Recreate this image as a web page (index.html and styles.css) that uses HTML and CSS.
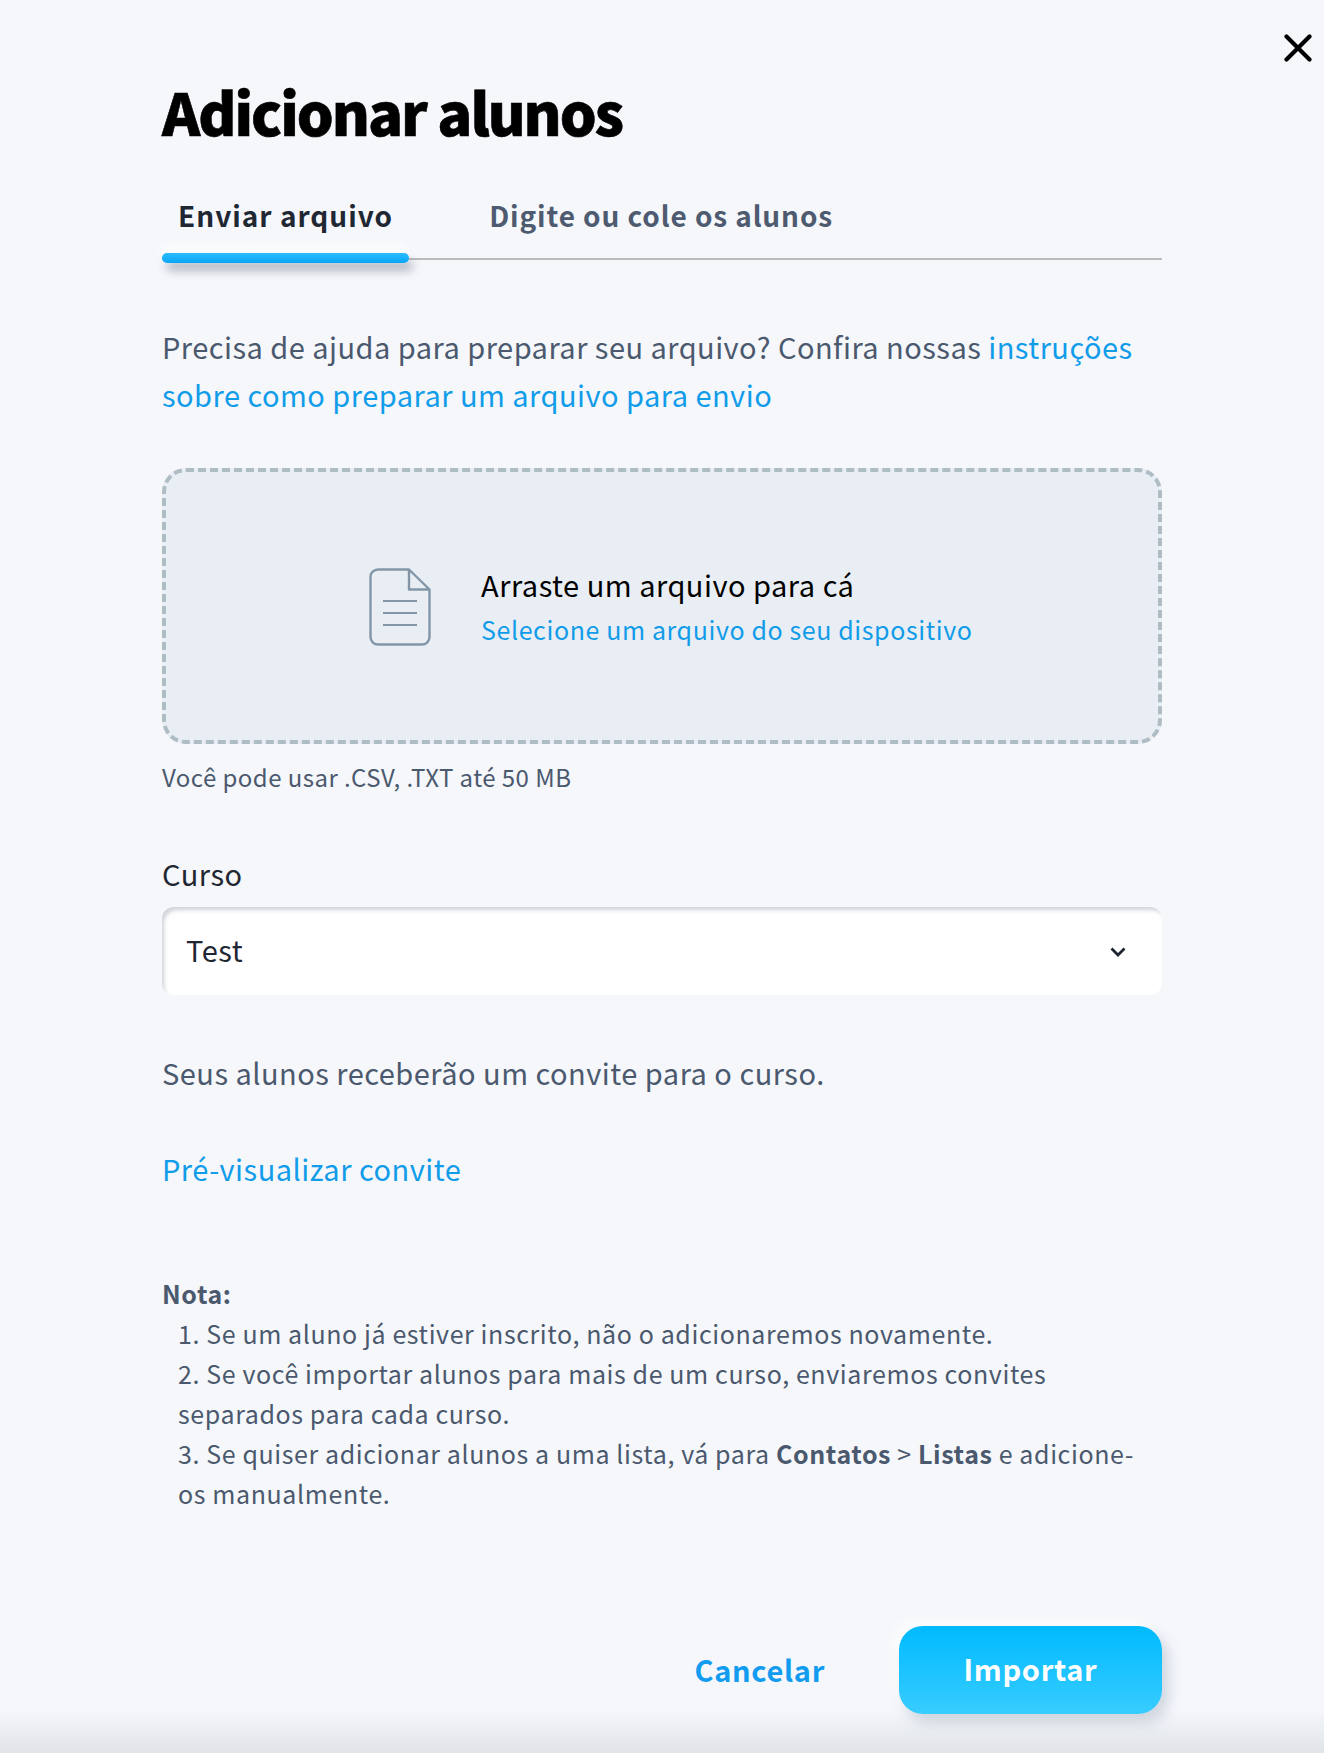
FILE: index.html
```html
<!DOCTYPE html>
<html lang="pt-BR">
<head>
<meta charset="utf-8">
<title>Adicionar alunos</title>
<link rel="stylesheet" href="styles.css">
</head>
<body>
<button class="close" aria-label="Fechar">
  <svg viewBox="0 0 28 28" width="28" height="28"><path d="M2.500 2.500 25.500 25.500M25.500 2.500 2.500 25.500" fill="none" stroke="#000" stroke-width="4.200" stroke-linecap="round"/></svg>
</button>
<main class="modal">
  <h1 class="title">Adicionar alunos</h1>
  <nav class="tabs">
    <a class="tab tab-active">Enviar arquivo</a>
    <a class="tab">Digite ou cole os alunos</a>
  </nav>
  <p class="intro">Precisa de ajuda para preparar seu arquivo? Confira nossas <a class="link">instruções sobre como preparar um arquivo para envio</a></p>
  <div class="drop">
    <svg class="doc" viewBox="0 0 62 78" width="62" height="78"><path d="M40 1.500H9A7.500 7.500 0 0 0 1.500 9V69A7.500 7.500 0 0 0 9 76.500H53A7.500 7.500 0 0 0 60.500 69V21.500H40V1.500L60.500 21.500" fill="none" stroke="#8296a8" stroke-width="2.400" stroke-linejoin="round"/><path d="M14 33H48M14 45H48M14 57H48" stroke="#8296a8" stroke-width="2"/></svg>
    <div class="drop-text">
      <div class="drop-title">Arraste um arquivo para cá</div>
      <a class="drop-link">Selecione um arquivo do seu dispositivo</a>
    </div>
  </div>
  <p class="hint">Você pode usar .CSV, .TXT até 50 MB</p>
  <label class="label">Curso</label>
  <div class="select">
    <span class="select-value">Test</span>
    <svg class="chevron" viewBox="0 0 16 10" width="16" height="10"><path d="M1.500 1.500 8 8l6.500-6.500" fill="none" stroke="#1f2530" stroke-width="2.800"/></svg>
  </div>
  <p class="invite">Seus alunos receberão um convite para o curso.</p>
  <a class="preview">Pré-visualizar convite</a>
  <section class="note">
    <strong class="note-title">Nota:</strong>
    <ol class="note-list">
      <li>Se um aluno já estiver inscrito, não o adicionaremos novamente.</li>
      <li>Se você importar alunos para mais de um curso, enviaremos convites separados para cada curso.</li>
      <li>Se quiser adicionar alunos a uma lista, vá para <strong>Contatos</strong> &gt; <strong>Listas</strong> e adicione-os manualmente.</li>
    </ol>
  </section>
  <footer class="actions">
    <button class="cancel">Cancelar</button>
    <button class="import">Importar</button>
  </footer>
</main>
<div class="shade"></div>
</body>
</html>
```
FILE: styles.css
```css
* { box-sizing: border-box; }
html, body { margin: 0; height: 1753px; overflow: hidden; }
body {
  position: relative;
  background: #f5f7fb;
  font-family: "Noto Sans CJK JP", "Noto Sans", sans-serif;
  color: #4b596e;
}
.close {
  position: absolute; top: 34px; left: 1284px;
  padding: 0; border: 0; background: none; line-height: 0;
}
.modal { position: relative; z-index: 1; width: 1000px; margin: 0 auto; padding-top: 69px; }
.title {
  margin: 0; font-size: 58px; line-height: 84px; font-weight: 900;
  color: #000; letter-spacing: -2px; -webkit-text-stroke: .6px #000;
}
.tabs {
  display: flex; gap: 96px; margin-top: 39px; height: 68px;
  padding-left: 16px; border-bottom: 2px solid #bbb;
}
.tab {
  font-size: 28px; line-height: 46px; font-weight: 700; color: #4d5a70; letter-spacing: .9px;
  position: relative; height: 66px;
}
.tab-active { color: #1f2733; letter-spacing: 1px; }
.tab-active::after {
  content: ""; position: absolute; left: -16px; right: -16px; bottom: -5px; height: 10px;
  border-radius: 5px; background: linear-gradient(#2bbcff, #0aa6f6);
  box-shadow: 4px 8px 10px rgba(70,80,100,.38), -2px -7px 10px rgba(255,255,255,.8);
}
.intro { margin: 62px 0 0; font-size: 29px; line-height: 48px; letter-spacing: .47px; }
.link, .drop-link, .preview { color: #119cea; }
.drop {
  display: flex; align-items: center; gap: 50px;
  height: 276px; margin-top: 50px; padding: 2px 0 0 203px;
  background: #e9eef5; border: 4px dashed #aebcc4; border-radius: 24px;
}
.drop-title { font-size: 29px; line-height: 44px; color: #000; letter-spacing: .5px; }
.drop-link { display: block; font-size: 25px; line-height: 46px; letter-spacing: .6px; }
.hint { margin: 15px 0 0; font-size: 24px; line-height: 36px; letter-spacing: .45px; }
.label { display: block; margin-top: 55px; font-size: 29px; line-height: 46px; color: #1f2733; letter-spacing: .5px; }
.select {
  display: flex; align-items: center; justify-content: space-between;
  height: 88px; margin-top: 11px; padding: 0 36px 0 24px;
  background: #fff; border-radius: 12px; font-size: 29px; color: #1f2733; letter-spacing: .5px;
  box-shadow: inset 3px 4px 4px -1px rgba(110,125,145,.35);
}
.select-value { margin-bottom: 4px; }
.chevron { margin-top: 2px; }
.invite { margin: 54px 0 0; font-size: 29px; line-height: 46px; letter-spacing: .48px; }
.preview { display: block; margin-top: 50px; font-size: 29px; line-height: 46px; letter-spacing: .5px; }
.note { margin-top: 83px; font-size: 25px; line-height: 40px; letter-spacing: .6px; }
.note-title { display: block; line-height: 39px; }
.note-list { margin: 0; padding: 0 0 0 16px; list-style-position: inside; }
.note strong { font-weight: 700; }
.actions { display: flex; justify-content: flex-end; align-items: center; gap: 74px; margin-top: 113px; }
.cancel {
  padding: 0 0 3px; border: 0; background: none; font: inherit; font-size: 29px; font-weight: 700;
  color: #119cf0; letter-spacing: .7px;
}
.import {
  width: 263px; height: 88px; padding: 0 0 4px; border: 0; border-radius: 24px; font: inherit; font-size: 29px; font-weight: 700;
  color: #fff; letter-spacing: .7px; background: linear-gradient(#00baff, #38ccff);
  box-shadow: 6px 8px 14px rgba(90,110,140,.25), -6px -6px 12px rgba(255,255,255,.8);
}
.shade {
  position: absolute; left: 0; right: 0; bottom: 0; height: 44px;
  background: linear-gradient(rgba(224,227,232,0), #e0e3e8); pointer-events: none;
}
```
